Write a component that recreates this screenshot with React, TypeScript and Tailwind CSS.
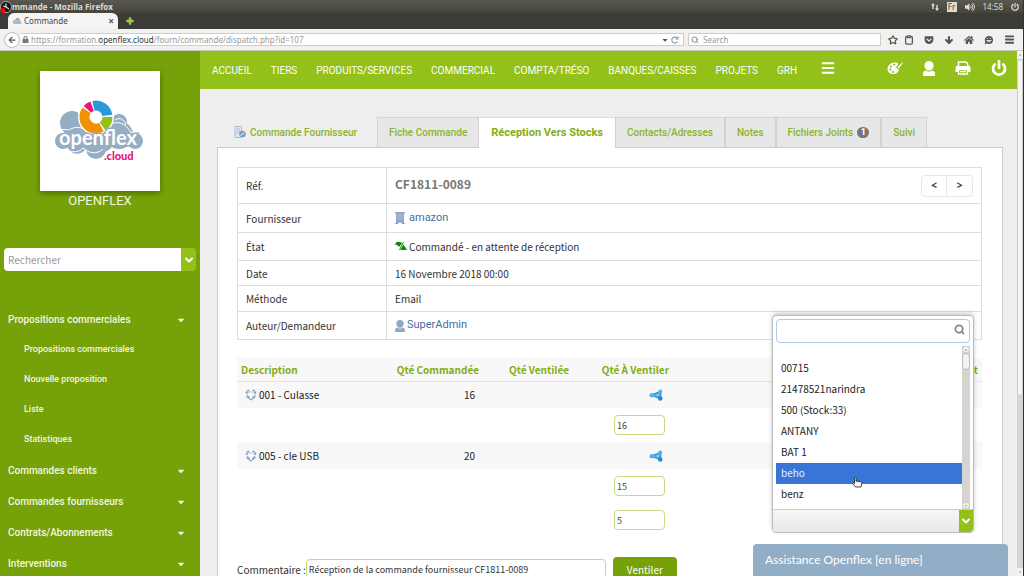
import { useState } from 'react';
import { ArrowDown, ChevronDown, Clipboard, Menu, Power, Search, Star } from 'lucide-react';
import { FaArrowLeft, FaCaretDown, FaHome, FaLock, FaPlus, FaPowerOff, FaVolumeUp } from 'react-icons/fa';
import { FaGetPocket } from 'react-icons/fa6';

const navItems = ['ACCUEIL', 'TIERS', 'PRODUITS/SERVICES', 'COMMERCIAL', 'COMPTA/TRÉSO', 'BANQUES/CAISSES', 'PROJETS', 'GRH'];

const menu = [
  { label: 'Propositions commerciales', children: ['Propositions commerciales', 'Nouvelle proposition', 'Liste', 'Statistiques'] },
  { label: 'Commandes clients', children: [] },
  { label: 'Commandes fournisseurs', children: [] },
  { label: 'Contrats/Abonnements', children: [] },
  { label: 'Interventions', children: [] },
];

const tabs = [
  { label: 'Fiche Commande' },
  { label: 'Réception Vers Stocks', active: true },
  { label: 'Contacts/Adresses' },
  { label: 'Notes' },
  { label: 'Fichiers Joints', count: 1 },
  { label: 'Suivi' },
];

const lines = [
  { ref: '001 - Culasse', qty: 16, dispatch: ['16'] },
  { ref: '005 - cle USB', qty: 20, dispatch: ['15', '5'] },
];

const warehouses = ['00715', '21478521narindra', '500 (Stock:33)', 'ANTANY', 'BAT 1', 'beho', 'benz'];

function PersonIcon({ className }: { className: string }) {
  return (
    <svg className={className} viewBox="0 0 12 15" fill="currentColor" aria-hidden="true">
      <path d="M6 0a4.6 4.6 0 0 1 4.6 4.600C10.600 7.500 8.600 9.600 6 9.600S1.400 7.500 1.400 4.600A4.600 4.600 0 0 1 6 0z" />
      <path d="M0 15v-2.500C0 10.800 1.200 10 2.600 9.500c2 1.500 4.800 1.500 6.800 0 1.400.5 2.600 1.300 2.600 3V15z" />
    </svg>
  );
}

function PaletteIcon() {
  return (
    <svg className="h-4 w-4" viewBox="0 0 16 16" aria-hidden="true">
      <path fill="#fff" d="M7 2.500c2.200-.3 4 .3 4.200 1.500.1 1.100-1.500 1.300-1.400 2.500.1 1.100 2.200.6 2.100 2.700-.2 2.900-3.100 5.200-6.300 4.800C2.300 13.600.3 11.300.6 8.400.9 5.200 3.800 2.900 7 2.500z" />
      <g fill="#94c01a">
        <circle cx="7.300" cy="4.700" r="1.100" />
        <circle cx="4" cy="6.500" r="1.100" />
        <circle cx="3.300" cy="9.700" r="1.100" />
        <circle cx="6" cy="12" r="1.100" />
      </g>
      <path d="M9 9.500l3.500-4" stroke="#94c01a" strokeWidth="3" />
      <path d="M7 11c.2-2 1.200-3 2.800-2.900l1.200 1.200c-.2 1.500-2 2.200-4 1.700zM10.500 7.200l5-5 .5.500-4.200 5.700z" fill="#fff" />
    </svg>
  );
}

function PrinterIcon() {
  return (
    <svg className="h-4 w-4" viewBox="0 0 16 16" aria-hidden="true">
      <path d="M3.500 6V2h7.500l1.700 1.700V6" fill="none" stroke="#fff" strokeWidth="1.500" />
      <path d="M2 6h12a1.500 1.500 0 0 1 1.500 1.500V12H13V9.500H3V12H.5V7.500A1.500 1.500 0 0 1 2 6z" fill="#fff" />
      <path d="M3.500 9.500h9V14h-9zM5 11.700h6" fill="none" stroke="#fff" strokeWidth="1.300" />
    </svg>
  );
}

function BoxIcon() {
  return (
    <svg className="h-3 w-3" viewBox="0 0 12 12" aria-hidden="true">
      <path d="M.5 2.500L4 1l2 1.500L8 1l3.500 1.500L10 4.500 6 3.500 2 4.500z" fill="#c9d7e6" />
      <path d="M1.500 5.500v3L5 10.700V8zM10.500 5.500v3L7 10.700V8z" fill="#8faac8" />
      <path d="M1 2.800l1.500 2M11 2.800l-1.500 2M4 1L2 2M8 1l2 1M5 10.700h2" fill="none" stroke="#7896b8" strokeWidth="1.200" />
    </svg>
  );
}

function ShareIcon() {
  return (
    <svg className="h-3 w-3.5" viewBox="0 0 14 12" aria-hidden="true">
      <path d="M11.500 2.500L3 6.200l8.500 3.300z" fill="#7cc4ee" stroke="#2f9bdc" strokeWidth="1.800" strokeLinejoin="round" />
      <circle cx="11.300" cy="2.500" r="2" fill="#58b2e8" />
      <circle cx="2.800" cy="6.200" r="2.300" fill="#58b2e8" />
      <circle cx="11.300" cy="9.500" r="2.200" fill="#1c87cf" />
    </svg>
  );
}

function Logo() {
  return (
    <svg className="h-[62px] w-[92px]" viewBox="0 0 92 62" role="img" aria-label="openflex.cloud">
      <g fill="#96adc6">
        <circle cx="18" cy="23" r="12" />
        <circle cx="65" cy="22" r="8" />
        <circle cx="9" cy="41" r="8" />
        <circle cx="23" cy="44" r="10" />
        <circle cx="42" cy="49" r="10" />
        <circle cx="81" cy="41" r="8" />
        <circle cx="65" cy="35" r="14" />
        <circle cx="48" cy="40" r="12" />
        <circle cx="28" cy="37" r="12" />
      </g>
      <g fill="none" stroke="#fff" strokeWidth="1">
        <path d="M2 34c3-5 9-5 13-4 5-4 14-3 18 1M51 29c6-9 20-9 26 4M77 33c4-3 9-1 12 3M61 20c5-3 9-1 11 5" />
        <path d="M14 50c6 3 11 2 15-2 5 5 14 7 20 1" />
      </g>
      <circle cx="42" cy="17" r="18" fill="#fff" />
      <g fill="none" strokeWidth="10">
        <path d="M39.400 5.800A11.500 11.500 0 0 1 53.400 15.400" stroke="#2a9ad6" />
        <path d="M53.500 17A11.500 11.500 0 0 1 48.600 26.400" stroke="#94c01a" />
        <path d="M47.400 27.200A11.500 11.500 0 0 1 32.600 10.400" stroke="#f29100" />
        <path d="M33.500 9.300A11.500 11.500 0 0 1 38.100 6.200" stroke="#e6147d" />
      </g>
      <text x="44" y="45" textAnchor="middle" fontFamily="Lato, sans-serif" fontSize="20" fontWeight="700" fill="#fff" stroke="#96adc6" strokeWidth="3" paintOrder="stroke">openflex</text>
      <text x="50" y="60" fontFamily="Lato, sans-serif" fontSize="11" fontWeight="900" fill="#e6147d">.cloud</text>
    </svg>
  );
}

function BrowserBar() {
  return (
    <div className="shrink-0 font-['Noto_Sans',sans-serif]">
      <div className="flex h-[13px] items-center justify-between bg-linear-to-b from-[#5a594f] to-[#45443e] pr-1 text-[8px] leading-3 text-[#dfdbd2]">
        <div className="flex items-center">
          <svg className="h-3 w-3" viewBox="0 0 12 12" aria-hidden="true">
            <circle cx="6" cy="6" r="5.500" fill="#111" stroke="#ddd" strokeWidth=".7" />
            <path d="M6 6V2.500M6 6L9 8M6 6L3 5" stroke="#ddd" strokeWidth="1.300" />
            <circle cx="3" cy="9.500" r="2.500" fill="#f00" />
          </svg>
          <span className="font-['Open_Sans',sans-serif] font-bold">mmande - Mozilla Firefox</span>
        </div>
        <div className="flex items-center gap-2">
          <svg className="h-2 w-2" viewBox="0 0 8 8" fill="#e6e3dc" aria-hidden="true">
            <path d="M2 0l2 2.500H2.700V6H1.300V2.500H0zM6 8L4 5.500h1.300V2h1.400v3.500H8z" />
          </svg>
          <span className="flex h-2.5 w-2.5 items-center justify-center bg-[#dfdbd2] text-[#45443e]">Fr</span>
          <FaVolumeUp className="h-2.5 w-2.5" />
          <span>14:58</span>
          <FaPowerOff className="h-2 w-2" />
        </div>
      </div>
      <div className="flex h-4 items-end bg-[#3c3b37] pl-2">
        <div className="flex h-4 w-[110px] items-center rounded-t-md bg-[#f5f4f2] px-1 text-[8px] text-[#444]">
          <svg className="h-2 w-2.5" viewBox="0 0 10 8" aria-hidden="true">
            <path d="M1 6a2 2 0 0 1 2-3 2.500 2.500 0 0 1 5 1 1.500 1.500 0 0 1 0 3H2z" fill="#a9bccf" />
            <path d="M4 3l2-2 1 2" stroke="#f29100" fill="none" />
          </svg>
          <span className="grow pl-0.5">Commande</span>
          <button aria-label="Fermer l'onglet" className="text-[10px] font-bold text-[#555]">×</button>
        </div>
        <button aria-label="Nouvel onglet" className="flex h-4 items-center pl-2 text-[#a5d048]">
          <FaPlus className="h-2 w-2 stroke-current stroke-[60]" />
        </button>
      </div>
      <div className="flex h-[22px] items-center border-b border-[#c9c7c0] bg-[#f2f1ef] pr-2 pl-1 text-[8px] text-[#555]">
        <button aria-label="Précédent" className="flex h-4 w-4 shrink-0 items-center justify-center rounded-full border border-[#bbb] bg-white">
          <FaArrowLeft className="h-2 w-2" />
        </button>
        <div className="mr-1 flex h-[13px] grow items-center gap-0.5 border border-l-0 border-[#cfcdc8] bg-white pr-1">
          <FaLock className="ml-0.5 h-[7px] w-[7px] shrink-0 text-[#777]" />
          <span className="grow text-[#999]">
            https://formation.<span className="text-[#333]">openflex.cloud</span>/fourn/commande/dispatch.php?id=107
          </span>
          <FaCaretDown className="h-2 w-2" />
          <svg className="h-2 w-2" viewBox="0 0 8 8" fill="none" stroke="#8fa0b4" strokeWidth="1.200" aria-hidden="true">
            <path d="M6.500 5.500A3 3 0 1 1 6 2M7 .5V3H4.500" />
          </svg>
        </div>
        <div className="flex h-[13px] w-[193px] shrink-0 items-center gap-1 border border-[#cfcdc8] bg-white px-0.5">
          <Search className="h-2 w-2 shrink-0" />
          <input aria-label="Search" placeholder="Search" className="min-w-0 grow bg-transparent outline-none placeholder:text-[#999]" />
        </div>
        <div className="flex shrink-0 items-center gap-[10px] pl-[7px]">
          <Star className="h-[10px] w-[10px]" strokeWidth={3} />
          <Clipboard className="-ml-1 h-[10px] w-[10px]" strokeWidth={3} />
          <FaGetPocket className="h-[10px] w-[10px]" />
          <ArrowDown className="h-[10px] w-[10px]" strokeWidth={5} />
          <FaHome className="h-[10px] w-[10px]" />
          <svg className="h-[10px] w-[10px]" viewBox="0 0 10 10" fill="currentColor" aria-hidden="true">
            <path d="M5 1a4 4 0 0 1 0 8c-1 0-2-.3-2.500-.5L.5 9.500 1.300 7A4 4 0 0 1 5 1z" />
            <path d="M2.800 5.500c1 1.800 3.400 1.800 4.400 0zM3 3.500h1M6 3.500h1" stroke="#fff" strokeWidth=".8" fill="none" />
          </svg>
          <Menu className="h-[11px] w-[11px]" strokeWidth={4} />
        </div>
      </div>
    </div>
  );
}

function Sidebar() {
  return (
    <aside className="flex w-[200px] shrink-0 flex-col overflow-hidden bg-[#77a108] font-[Roboto,sans-serif] text-[#f1f6e0]">
      <div className="mx-auto mt-5 flex h-[120px] w-[120px] shrink-0 items-center justify-center bg-white shadow-[0_2px_6px_rgba(0,0,0,0.35)]">
        <Logo />
      </div>
      <div className="text-center text-[13px] leading-5">OPENFLEX</div>
      <form className="mx-1 mt-[37px] flex h-[23px] shrink-0 overflow-hidden rounded">
        <input aria-label="Rechercher" placeholder="Rechercher" className="min-w-0 grow bg-white px-1 font-['Noto_Sans_CJK_SC',sans-serif] text-[10px] text-[#444] outline-none placeholder:text-[#999]" />
        <button type="button" aria-label="Choisir" className="flex w-[15px] items-center justify-center bg-[#94c01a] text-white">
          <ChevronDown className="h-3 w-3" strokeWidth={4} />
        </button>
      </form>
      <nav className="mt-[33px] text-[10px] font-medium">
        {menu.map((m) => (
          <div key={m.label}>
            <a href="#" className="flex h-[31px] items-center justify-between pr-[14px] pl-2">
              {m.label}
              <FaCaretDown className="h-2.5 w-2.5" />
            </a>
            {m.children.map((c) => (
              <a key={c} href="#" className="flex h-[30px] items-center pl-6 text-[9px]">{c}</a>
            ))}
          </div>
        ))}
      </nav>
    </aside>
  );
}

function TopNav() {
  return (
    <nav className="flex h-[38px] shrink-0 items-center justify-between bg-[#94c01a] pr-2.5 pl-3 font-[Roboto,sans-serif] text-[10px] text-white">
      <div className="flex items-center gap-[19px]">
        {navItems.map((n) => <a key={n} href="#">{n}</a>)}
        <button aria-label="Menu" className="ml-1 pb-1"><Menu className="h-4 w-4" strokeWidth={3} /></button>
      </div>
      <div className="flex items-center gap-5 pb-1">
        <button aria-label="Thème"><PaletteIcon /></button>
        <button aria-label="Utilisateur"><PersonIcon className="h-[15px] w-3" /></button>
        <button aria-label="Imprimer"><PrinterIcon /></button>
        <button aria-label="Déconnexion"><Power className="h-4 w-4" strokeWidth={4} /></button>
      </div>
    </nav>
  );
}

function Tabs() {
  return (
    <div className="flex h-[30px] items-stretch font-[Roboto,sans-serif] text-[10px] font-medium text-[#8ab52a]">
      <div className="flex w-[160px] items-center gap-1 pl-[17px]">
        <svg className="h-3 w-3" viewBox="0 0 12 12" aria-hidden="true">
          <path d="M1 .5h6.500v11H1zM2.500 3H6M2.500 5H6M2.500 7h2" fill="#dfe8f2" stroke="#a9bed6" />
          <circle cx="8.500" cy="8" r="3.300" fill="#7f9cc0" />
          <path d="M6.500 9.500l4-3" stroke="#fff" strokeWidth=".9" />
        </svg>
        Commande Fournisseur
      </div>
      {tabs.map((t) => (
        <a
          key={t.label}
          href="#"
          className={t.active
            ? '-mb-px flex items-center border-t border-[#ddd] bg-white px-3 text-[11px] font-bold text-[#84ad14]'
            : 'flex items-center border-t border-r border-l border-[#d2d2d2] bg-[#e7e7e7] px-[11px]'}
        >
          {t.label}
          {t.count && <span className="ml-1 flex h-[11px] w-3 items-center justify-center rounded-full bg-[#777] text-[9px] font-bold text-white">{t.count}</span>}
        </a>
      ))}
    </div>
  );
}

function OrderCard() {
  return (
    <table className="w-full border border-[#ddd] text-[10px] text-[#333] [&_td]:px-2 [&_th]:w-[149px] [&_th]:border-r [&_th]:border-[#ddd] [&_th]:px-2 [&_th]:text-left [&_th]:font-normal [&_tr]:border-b [&_tr]:border-[#ddd]">
      <tbody>
        <tr className="h-9">
          <th scope="row">Réf.</th>
          <td>
            <div className="flex items-center justify-between">
              <span className="pb-1 text-xs font-bold text-[#777]">CF1811-0089</span>
              <div className="flex font-['Noto_Sans',sans-serif] font-bold">
                <button aria-label="Précédent" className="h-[22px] w-[26px] rounded-l-sm border border-[#e8e8e8] text-[10px]">&lt;</button>
                <button aria-label="Suivant" className="h-[22px] w-[26px] rounded-r-sm border border-l-0 border-[#e8e8e8] text-[10px]">&gt;</button>
              </div>
            </div>
          </td>
        </tr>
        <tr className="h-[29px]">
          <th scope="row">Fournisseur</th>
          <td>
            <a href="#" className="flex items-center gap-1 font-[Roboto,sans-serif] text-[11px] text-[#3f70a5]">
              <svg className="h-3 w-2.5" viewBox="0 0 10 12" aria-hidden="true">
                <path d="M0 0h10v1.500H9V11h1v1H6.500v-1.500h-3V12H0v-1h1V1.500H0z" fill="#8fa8c8" />
                <path d="M2.500 3h5M2.500 5h5M2.500 7h5" stroke="#c5d3e4" strokeDasharray="1 1" />
              </svg>
              amazon
            </a>
          </td>
        </tr>
        <tr className="h-7">
          <th scope="row">État</th>
          <td>
            <div className="flex items-center gap-0.5">
              <svg className="h-3 w-3" viewBox="0 0 12 12" aria-hidden="true">
                <path d="M0 3.500L1.500 1h4L7 2.500 4 6 2.800 4.500zM5.500 9l2-4 1-1.500L12 9z" fill="#0f8a0f" />
                <path d="M8.500 1L4.500 9" stroke="#0f8a0f" />
              </svg>
              Commandé - en attente de réception
            </div>
          </td>
        </tr>
        <tr className="h-[25px]">
          <th scope="row">Date</th>
          <td>16 Novembre 2018 00:00</td>
        </tr>
        <tr className="h-[26px]">
          <th scope="row">Méthode</th>
          <td>Email</td>
        </tr>
        <tr className="h-7">
          <th scope="row">Auteur/Demandeur</th>
          <td>
            <a href="#" className="flex items-center gap-0.5 font-[Roboto,sans-serif] text-[11px] text-[#3f70a5]">
              <PersonIcon className="h-3 w-2.5 text-[#8fa8c8]" />
              SuperAdmin
            </a>
          </td>
        </tr>
      </tbody>
    </table>
  );
}

function DispatchTable() {
  return (
    <table className="mt-[18px] w-full table-fixed text-[10px] text-[#222]">
      <thead>
        <tr className="h-[23px] border-b border-[#e4e4e4] bg-[#f8f8f8] text-right text-[#84ad14] [&_th]:px-1 [&_th]:font-bold">
          <th className="w-[130px] text-left">Description</th>
          <th className="w-[116px]">Qté Commandée</th>
          <th className="w-[90px]">Qté Ventilée</th>
          <th className="w-[100px]">Qté À Ventiler</th>
          <th>Entrepôt</th>
        </tr>
      </thead>
      {lines.map((l) => (
        <tbody key={l.ref}>
          <tr className="h-[27px] bg-[#f8f8f8]">
            <td className="pl-2">
              <span className="flex items-center gap-0.5"><BoxIcon />{l.ref}</span>
            </td>
            <td className="pr-2 text-right">{l.qty}</td>
            <td />
            <td className="pr-2.5"><span className="flex justify-end"><ShareIcon /></span></td>
            <td />
          </tr>
          {l.dispatch.map((q, i) => (
            <tr key={i} className="h-[34px]">
              <td colSpan={3} />
              <td className="pr-2 text-right">
                <input aria-label={`Quantité à ventiler ${l.ref}`} defaultValue={q} className="h-5 w-[51px] rounded border border-[#c2dc80] bg-white px-0.5 text-[9px] text-[#444]" />
              </td>
              <td />
            </tr>
          ))}
        </tbody>
      ))}
    </table>
  );
}

function WarehouseSelect() {
  const [active, setActive] = useState('beho');
  return (
    <div className="absolute top-[264px] right-[43px] w-[202px] rounded border border-[#bbb] bg-white font-['Noto_Sans_CJK_SC',sans-serif] text-[10px] text-[#222] shadow-[0_-2px_4px_rgba(0,0,0,0.2)]">
      <div className="mx-[3px] mt-[3px] flex h-6 items-center rounded border border-[#a8cbee] px-1">
        <input aria-label="Rechercher un entrepôt" className="min-w-0 grow outline-none" />
        <Search className="mb-1 h-[11px] w-[11px] text-[#888]" strokeWidth={4} />
      </div>
      <div className="mt-[3px] flex h-[163px] pr-[3px] pl-[3px]">
        <ul role="listbox" aria-label="Entrepôts" className="grow pt-3">
          {warehouses.map((w) => (
            <li
              key={w}
              role="option"
              aria-selected={w === active}
              onMouseEnter={() => setActive(w)}
              className={w === active ? 'h-[21px] bg-[#3875d7] px-[5px] leading-[19px] text-[#e8f0fb]' : 'h-[21px] px-[5px] leading-[19px]'}
            >
              {w}
            </li>
          ))}
        </ul>
        <div className="flex w-2 flex-col items-center justify-between bg-[#d6d4d1] text-[#888]">
          <div className="w-full">
            <div className="flex h-[7px] items-center justify-center rounded-sm border border-[#ccc] bg-[#f4f3f2]"><FaCaretDown className="h-1 w-1 rotate-180" /></div>
            <div className="h-[17px] rounded border border-[#bbb] bg-[#f4f3f2]" />
          </div>
          <div className="flex h-[7px] w-full items-center justify-center rounded-sm border border-[#ccc] bg-[#f4f3f2]"><FaCaretDown className="h-1 w-1" /></div>
        </div>
      </div>
      <div className="flex h-[23px] overflow-hidden rounded-b border-t border-[#ccc]">
        <select aria-label="Entrepôt" className="min-w-0 grow appearance-none bg-linear-to-b from-[#f6f6f6] to-[#e8e8e8]" />
        <span className="flex w-[14px] items-center justify-center bg-[#94c01a] text-white"><ChevronDown className="h-3 w-3" strokeWidth={4} /></span>
      </div>
      <svg className="absolute top-[160px] left-[78px] h-3 w-3" viewBox="0 0 12 12" aria-hidden="true">
        <path d="M3.500 1.500c1-.6 1.500.3 1.500 1V5l5 .8c1 .2 1 1 .8 2L10 11H4.500L1.500 7.500c0-1 1-1 2 0z" fill="#f4f4f4" stroke="#333" strokeWidth=".9" />
      </svg>
    </div>
  );
}

export default function App() {
  return (
    <div className="flex h-screen flex-col overflow-hidden border-r border-[#333] bg-[#eee]">
      <BrowserBar />
      <div className="flex min-h-0 grow">
        <Sidebar />
        <div className="relative flex min-w-0 grow flex-col overflow-hidden">
          <TopNav />
          <main className="mt-7 mr-[14px] ml-[17px] font-['Noto_Sans_CJK_SC',sans-serif]">
            <Tabs />
            <div className="border border-[#ccc] bg-white pt-[19px] pr-5 pb-10 pl-[19px]">
              <OrderCard />
              <DispatchTable />
              <form className="mt-5 flex items-center text-[10px] text-[#333]">
                <label htmlFor="comment">Commentaire :</label>
                <input id="comment" defaultValue="Réception de la commande fournisseur CF1811-0089" className="mr-[7px] h-5 w-[300px] rounded border border-[#c2dc80] px-0.5 text-[9px]" />
                <button type="button" className="h-6 w-16 rounded bg-[#77a108] text-[10px] text-white">Ventiler</button>
              </form>
            </div>
          </main>
          <WarehouseSelect />
          <button className="absolute right-[9px] bottom-0 h-8 w-[255px] rounded-t bg-[#92adc6] px-3 text-left font-[Lato,sans-serif] text-xs text-white">
            Assistance Openflex [en ligne]
          </button>
        </div>
        <div className="flex w-1.5 shrink-0 flex-col justify-between bg-[#d6d4d1] text-[#888]">
          <div>
            <div className="flex h-2 items-center justify-center bg-[#f4f3f2]"><FaCaretDown className="h-1 w-1 rotate-180" /></div>
            <div className="h-[337px] rounded border border-[#ccc] bg-[#f6f5f4]" />
          </div>
          <div className="flex h-2 items-center justify-center bg-[#f4f3f2]"><FaCaretDown className="h-1 w-1" /></div>
        </div>
      </div>
    </div>
  );
}
